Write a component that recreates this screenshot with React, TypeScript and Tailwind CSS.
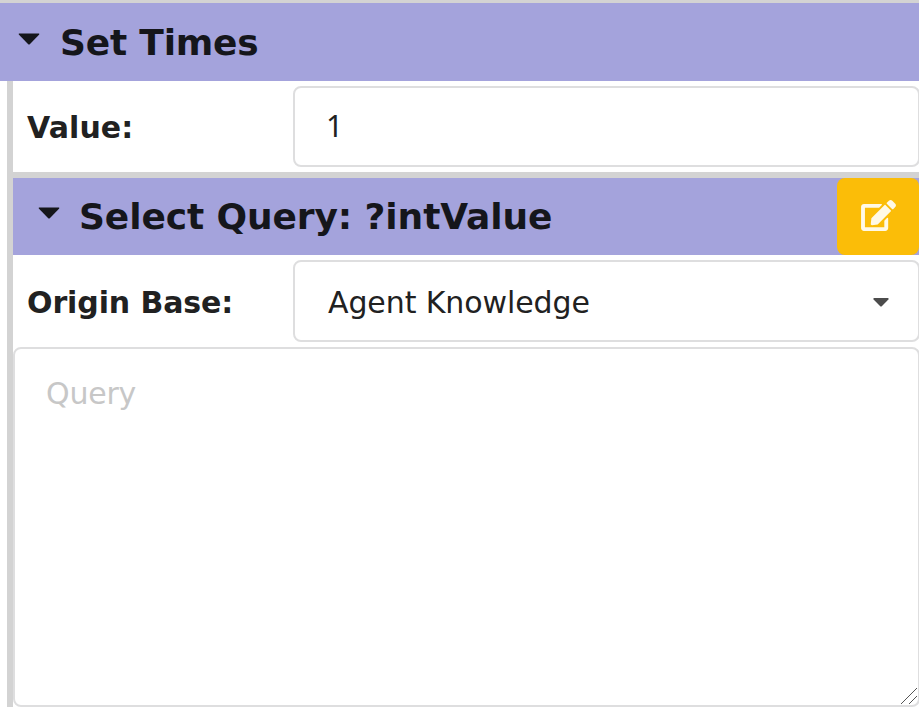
import React from "react";

function Caret({ className }: { className: string }) {
  return (
    <svg className={className} viewBox="0 0 22 12" fill="currentColor">
      <path d="M1 .4H21Q21.700 .8 21 1.700L12 11Q11 12 10 11L1 1.700Q.3 .8 1 .4Z" />
    </svg>
  );
}

const label = "pl-[14px] w-[280px] shrink-0 text-[30px] leading-[36px] font-bold whitespace-nowrap";
const field = "w-[627px] shrink-0 rounded-[8px] border-2 border-[#dededf] bg-white pl-[33px] text-[30px] leading-[36px]";

export default function App() {
  return (
    <div className="h-[713px] w-[919px] overflow-hidden bg-white font-['Verdana','DejaVu_Sans',sans-serif] text-[#212121]">
      <div className="flex h-[81px] items-start border-t-[3px] border-[#d3d3d3] bg-[#a4a3dc] text-[#15161b]">
        <Caret className="mt-[30px] ml-[18px] h-[12px] w-[22px] shrink-0" />
        <h2 className="mt-[18px] ml-[20px] text-[36px] leading-[44px] font-bold tracking-[-0.2px] whitespace-nowrap">Set Times</h2>
      </div>
      <div className="ml-[7px] h-[626px] border-l-[6px] border-[#d3d3d3]">
        <div className="flex h-[91px] pt-[5px]">
          <div className={label + " pt-[24px] tracking-[0.1px]"}>Value:</div>
          <div className={field + " h-[81px] pt-[20px]"}>
            <span className="-ml-[2px] font-['Noto_Sans',sans-serif]">1</span>
          </div>
        </div>
        <div className="flex h-[83px] items-start border-t-[6px] border-[#d3d3d3] bg-[#a4a3dc] text-[#15161b]">
          <Caret className="mt-[29px] ml-[25px] h-[12px] w-[22px] shrink-0" />
          <h3 className="mt-[17px] ml-[19px] text-[36px] leading-[44px] font-bold tracking-[-0.1px] whitespace-nowrap">Select Query: ?intValue</h3>
          <button className="ml-auto flex h-[77px] w-[82px] shrink-0 items-start rounded-[8px] bg-[#fbbd08] pt-[22px] pl-[24px] text-[#fff9e6]">
            <svg className="h-[31px] w-[35px]" viewBox="0 0 576 512" fill="currentColor">
              <path d="M402.6 83.2l90.2 90.2c3.800 3.800 3.800 10 0 13.800L274.400 405.600l-92.800 10.300c-12.400 1.400-22.900-9.100-21.500-21.500l10.300-92.800L388.800 83.200c3.800-3.800 10-3.800 13.800 0zm162-22.900l-48.800-48.800c-15.200-15.200-39.900-15.200-55.200 0l-35.400 35.400c-3.800 3.800-3.800 10 0 13.800l90.200 90.200c3.800 3.800 10 3.800 13.800 0l35.400-35.400c15.200-15.300 15.200-40 0-55.200zM384 346.200V448H64V128h229.800c3.200 0 6.200-1.300 8.500-3.500l40-40c7.600-7.600 2.200-20.500-8.500-20.500H48C21.500 64 0 85.500 0 112v352c0 26.500 21.500 48 48 48h352c26.500 0 48-21.500 48-48V306.200c0-10.700-12.900-16-20.500-8.500l-40 40c-2.200 2.300-3.500 5.300-3.500 8.500z" />
            </svg>
          </button>
        </div>
        <div className="flex h-[92px] pt-[5px]">
          <div className={label + " pt-[25px] tracking-[-0.1px]"}>Origin Base:</div>
          <div className={field + " flex h-[82px] pt-[23px]"}>
            <span className="tracking-[-0.1px] whitespace-nowrap">Agent Knowledge</span>
            <svg className="mt-[13px] mr-[29px] ml-auto h-[9px] w-[16px] text-[#4c4c4c]" viewBox="0 0 16 9" fill="currentColor">
              <path d="M.8 0H15.200Q16 .6 15.400 1.500L9 8Q8 9 7 8L.6 1.500Q0 .6 .8 0Z" />
            </svg>
          </div>
        </div>
        <textarea
          className="block h-[360px] w-[907px] resize-none rounded-[8px] border-2 border-[#dededf] bg-white px-[31px] pt-[27px] text-[30px] leading-[36px] tracking-[-0.2px] outline-none placeholder:text-[#c7c7c7]"
          placeholder="Query"
        />
        <svg className="relative -top-[19px] left-[888px] h-[16px] w-[16px]" viewBox="0 0 16 16" stroke="#555" strokeWidth="1">
          <path d="M0 16L16 0M8 16L16 8" />
        </svg>
      </div>
    </div>
  );
}
